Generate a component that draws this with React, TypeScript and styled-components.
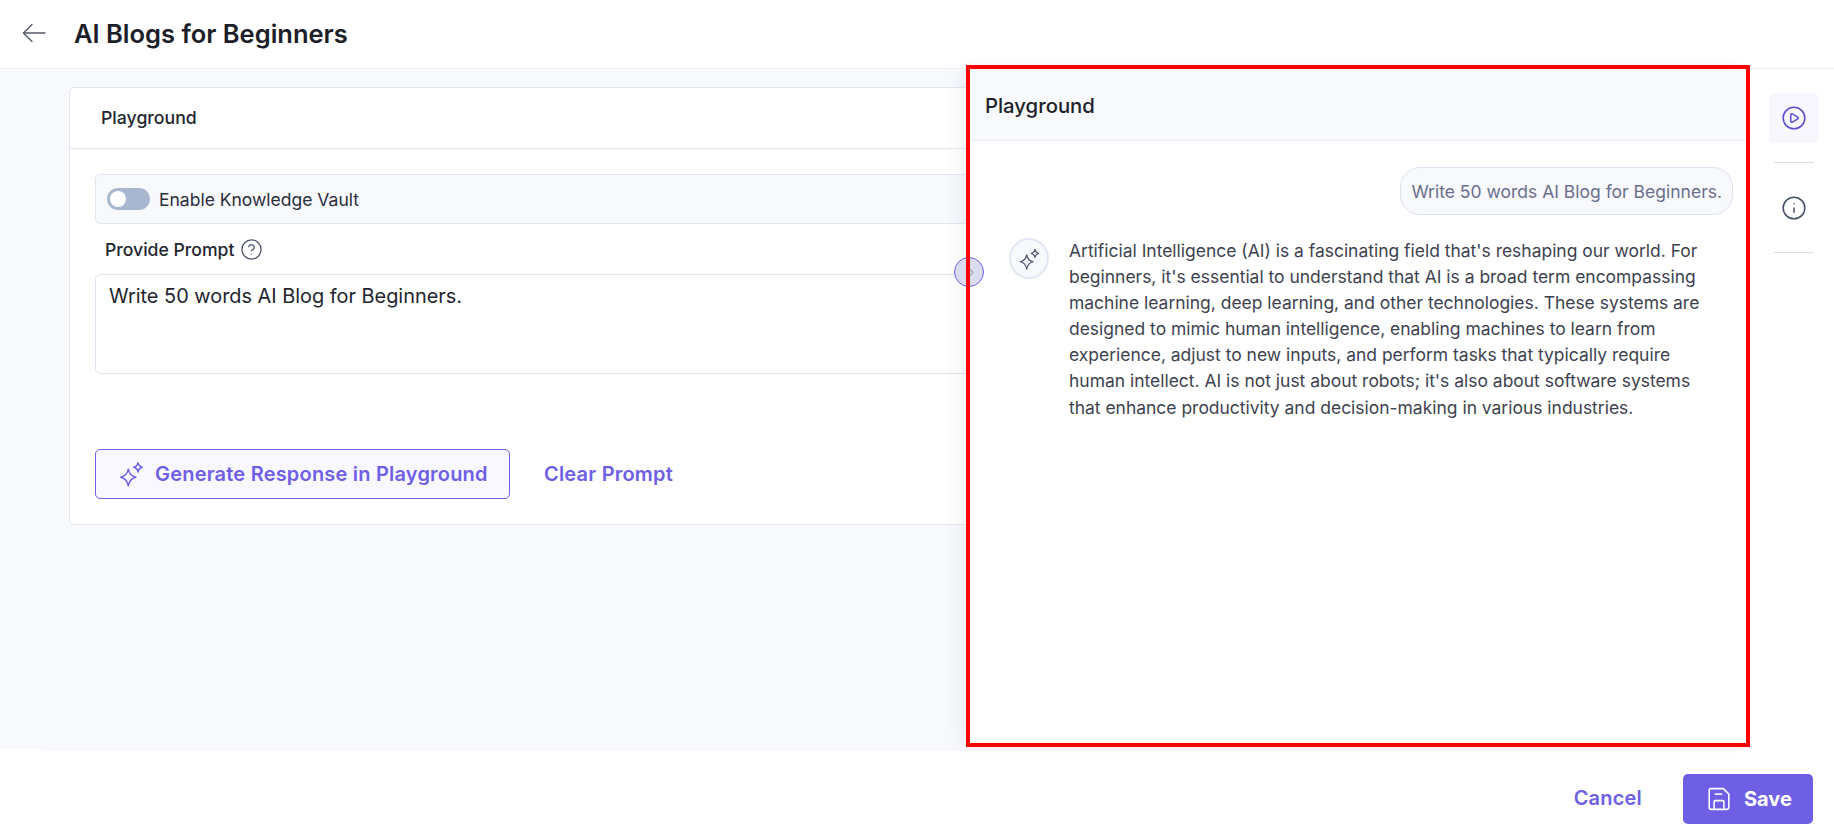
import React from 'react';
import styled, { createGlobalStyle } from 'styled-components';
import { ChevronRight, CircleHelp, CirclePlay, Info } from 'lucide-react';

const GlobalStyle = createGlobalStyle`
  * { box-sizing: border-box; }
  html, body { margin: 0; padding: 0; background: #fff; }
  body { font-family: Inter, "Liberation Sans", sans-serif; color: #1f2230; }
`;

const Page = styled.div`
  position: relative;
  width: 1834px;
  height: 833px;
  display: flex;
  flex-direction: column;
  overflow: hidden;
`;

const TopBar = styled.header`
  height: 69px;
  flex: none;
  display: flex;
  align-items: center;
  gap: 28px;
  padding: 0 0 2px 22px;
  border-bottom: 1px solid #eef0f6;
`;

const Title = styled.h1`
  margin: 0;
  font-size: 25.5px;
  font-weight: 600;
  color: #1c1e29;
`;

const Body = styled.div`
  flex: 1;
  display: flex;
  min-height: 0;
`;

const Strip = styled.div`
  width: 42px;
  flex: none;
  margin-bottom: 2px;
  background: #f8f9fd;
`;

const Content = styled.main`
  flex: 1;
  min-width: 0;
  padding: 18px 50px 0 27px;
  background: #f8f9fd;
`;

const Card = styled.section`
  height: 438px;
  background: #fff;
  border: 1px solid #e3e6f2;
  border-radius: 5px;
`;

const CardHead = styled.div`
  height: 61px;
  display: flex;
  align-items: center;
  padding: 0 0 2px 31px;
  font-size: 17.7px;
  font-weight: 500;
  color: #23252f;
  border-bottom: 1px solid #e3e6f2;
`;

const CardBody = styled.div`
  padding: 25px 25px 0;
`;

const VaultRow = styled.div`
  height: 50px;
  display: flex;
  align-items: center;
  gap: 9px;
  padding-left: 11px;
  background: #f8f9fd;
  border: 1px solid #e3e6f2;
  border-radius: 5px;
  font-size: 17.5px;
  color: #2b2e3b;
`;

const Toggle = styled.span`
  width: 43px;
  height: 22px;
  display: flex;
  align-items: center;
  padding-left: 3px;
  border-radius: 11px;
  background: #a9b6cf;
  &::after {
    content: '';
    width: 16px;
    height: 16px;
    border-radius: 50%;
    background: #fff;
  }
`;

const PromptLabel = styled.div`
  height: 50px;
  display: flex;
  align-items: center;
  gap: 6px;
  padding-left: 10px;
  font-size: 17.6px;
  font-weight: 550;
  color: #23252f;
  svg { color: #4a5068; }
`;

const PromptBox = styled.div`
  height: 100px;
  padding: 7px 13px;
  border: 1px solid #e0e3ef;
  border-radius: 5px;
  font-size: 19.9px;
  line-height: 28px;
  color: #23252f;
`;

const Actions = styled.div`
  display: flex;
  align-items: center;
  gap: 34px;
  margin-top: 75px;
`;

const OutlineButton = styled.button`
  width: 415px;
  height: 50px;
  display: flex;
  align-items: center;
  gap: 11px;
  padding: 0 0 0 22px;
  background: #f9f8ff;
  border: 1px solid #6e5fe5;
  border-radius: 5px;
  font: 600 20px Inter, "Liberation Sans", sans-serif;
  letter-spacing: 0.2px;
  color: #6e5fe5;
`;

const TextButton = styled.button`
  padding: 0;
  background: none;
  border: none;
  font: 600 20px Inter, "Liberation Sans", sans-serif;
  letter-spacing: 0.2px;
  color: #6e5fe5;
`;

const Rail = styled.aside`
  width: 84px;
  flex: none;
  display: flex;
  flex-direction: column;
  align-items: center;
  padding: 24px 0 0 4px;
  background: #fff;
`;

const RailButton = styled.button<{ $active?: boolean }>`
  width: 50px;
  height: 50px;
  display: flex;
  align-items: center;
  justify-content: center;
  padding: 0;
  border: none;
  border-radius: 5px;
  background: ${(p) => (p.$active ? '#f8f7fe' : 'transparent')};
  color: ${(p) => (p.$active ? '#5b4fd0' : '#47506a')};
`;

const RailDivider = styled.div`
  width: 40px;
  height: 1px;
  margin: 19px 0 20px;
  background: #d9deea;
`;

const Footer = styled.footer`
  height: 82px;
  flex: none;
  display: flex;
  justify-content: flex-end;
  align-items: flex-start;
  gap: 41px;
  padding: 23px 21px 0 0;
`;

const CancelButton = styled(TextButton)`
  height: 48px;
`;

const SaveButton = styled.button`
  width: 130px;
  height: 50px;
  display: flex;
  align-items: center;
  gap: 13px;
  padding: 0 0 0 24px;
  background: #6e5fe5;
  border: none;
  border-radius: 5px;
  font: 700 20px Inter, "Liberation Sans", sans-serif;
  color: #fff;
`;

/* drawer over the page */
const Drawer = styled.section`
  position: absolute;
  left: 970px;
  top: 69px;
  width: 777px;
  height: 674px;
  background: #fff;
  box-shadow: -8px 0 18px rgba(40, 44, 70, 0.07);
`;

const DrawerHead = styled.div`
  height: 72px;
  display: flex;
  align-items: center;
  padding: 2px 0 0 15px;
  background: #f8f9fd;
  border-bottom: 1px solid #eceef6;
  font-size: 20.3px;
  font-weight: 500;
  color: #1c1e29;
`;

const DrawerBody = styled.div`
  padding: 26px 14px 0 39px;
  display: flex;
  flex-direction: column;
`;

const Bubble = styled.div`
  align-self: flex-end;
  height: 48px;
  display: flex;
  align-items: center;
  padding: 0 10px;
  background: #f8f9fd;
  border: 1px solid #dfe3f0;
  border-radius: 20px;
  font-size: 17.5px;
  color: #6a6f8d;
`;

const Reply = styled.div`
  display: flex;
  gap: 20px;
  margin-top: 23px;
`;

const Avatar = styled.div`
  width: 40px;
  height: 41px;
  flex: none;
  display: flex;
  align-items: center;
  justify-content: center;
  border-radius: 50%;
  background: #f8f9fd;
  border: 2px solid #e3e6f3;
  color: #47506a;
`;

const ReplyText = styled.p`
  width: 640px;
  margin: 0;
  font-size: 17.47px;
  line-height: 26.1px;
  color: #3e4250;
`;

const CollapseButton = styled.button`
  position: absolute;
  left: 954px;
  top: 257px;
  width: 30px;
  height: 30px;
  display: flex;
  align-items: center;
  justify-content: center;
  padding: 0 0 0 5px;
  background: #d9ddef;
  border: 1px solid #6e5fe5;
  border-radius: 50%;
  color: #5f6478;
`;

const RedFrame = styled.div`
  position: absolute;
  left: 966px;
  top: 65px;
  width: 784px;
  height: 682px;
  border: 4px solid #ff0000;
  pointer-events: none;
`;

function BackArrow() {
  return (
    <svg width="24" height="20" viewBox="0 0 24 20" fill="none" stroke="#555b6e" strokeWidth="1.4" strokeLinecap="round" strokeLinejoin="round">
      <path d="M23 10H1.5" />
      <path d="M10 1.5L1.5 10L10 18.5" />
    </svg>
  );
}

function Sparkles({ size }: { size: number }) {
  return (
    <svg width={size} height={size} viewBox="0 0 24 24" fill="none" stroke="currentColor" strokeWidth="1.3" strokeLinejoin="round">
      <path d="M9.5 7.5C10.3 12 12 14 16.5 15C12 16 10.3 18.2 9.5 23C8.7 18.2 7 16 2.5 15C7 14 8.7 12 9.5 7.5Z" />
      <path d="M18.5 1.5C19 4.2 19.9 5.2 22.5 5.8C19.9 6.4 19 7.4 18.5 10.2C18 7.4 17.1 6.4 14.5 5.8C17.1 5.2 18 4.2 18.5 1.5Z" />
    </svg>
  );
}

function SaveIcon() {
  return (
    <svg width="24" height="24" viewBox="0 0 22 22" fill="none" stroke="currentColor" strokeWidth="1.4" strokeLinejoin="round">
      <path d="M3.5 1.5H15L20 6.5V18.5A2 2 0 0 1 18 20.5H4A2 2 0 0 1 2 18.5V3A1.5 1.5 0 0 1 3.5 1.5Z" />
      <path d="M7 6.5H14" />
      <path d="M6.5 20.5V13.5A1 1 0 0 1 7.5 12.5H14.5A1 1 0 0 1 15.5 13.5V20.5" />
    </svg>
  );
}

export default function App() {
  return (
    <Page>
      <GlobalStyle />
      <TopBar>
        <BackArrow />
        <Title>AI Blogs for Beginners</Title>
      </TopBar>
      <Body>
        <Strip />
        <Content>
          <Card>
            <CardHead>Playground</CardHead>
            <CardBody>
              <VaultRow>
                <Toggle />
                Enable Knowledge Vault
              </VaultRow>
              <PromptLabel>
                Provide Prompt
                <CircleHelp size={23} strokeWidth={1.3} />
              </PromptLabel>
              <PromptBox>Write 50 words AI Blog for Beginners.</PromptBox>
              <Actions>
                <OutlineButton>
                  <Sparkles size={26} />
                  Generate Response in Playground
                </OutlineButton>
                <TextButton>Clear Prompt</TextButton>
              </Actions>
            </CardBody>
          </Card>
        </Content>
        <Rail>
          <RailButton $active>
            <CirclePlay size={26} strokeWidth={1.4} />
          </RailButton>
          <RailDivider />
          <RailButton>
            <Info size={26} strokeWidth={1.4} />
          </RailButton>
          <RailDivider />
        </Rail>
      </Body>
      <Footer>
        <CancelButton>Cancel</CancelButton>
        <SaveButton>
          <SaveIcon />
          Save
        </SaveButton>
      </Footer>
      <Drawer>
        <DrawerHead>Playground</DrawerHead>
        <DrawerBody>
          <Bubble>Write 50 words AI Blog for Beginners.</Bubble>
          <Reply>
            <Avatar>
              <Sparkles size={22} />
            </Avatar>
            <ReplyText>
              Artificial Intelligence (AI) is a fascinating field that's reshaping our world. For beginners, it's essential to understand that AI is a broad term encompassing machine learning, deep learning, and other technologies. These systems are designed to mimic human intelligence, enabling machines to learn from experience, adjust to new inputs, and perform tasks that typically require human intellect. AI is not just about robots; it's also about software systems that enhance productivity and decision-making in various industries.
            </ReplyText>
          </Reply>
        </DrawerBody>
      </Drawer>
      <CollapseButton>
        <ChevronRight size={13} strokeWidth={1.5} />
      </CollapseButton>
      <RedFrame />
    </Page>
  );
}
